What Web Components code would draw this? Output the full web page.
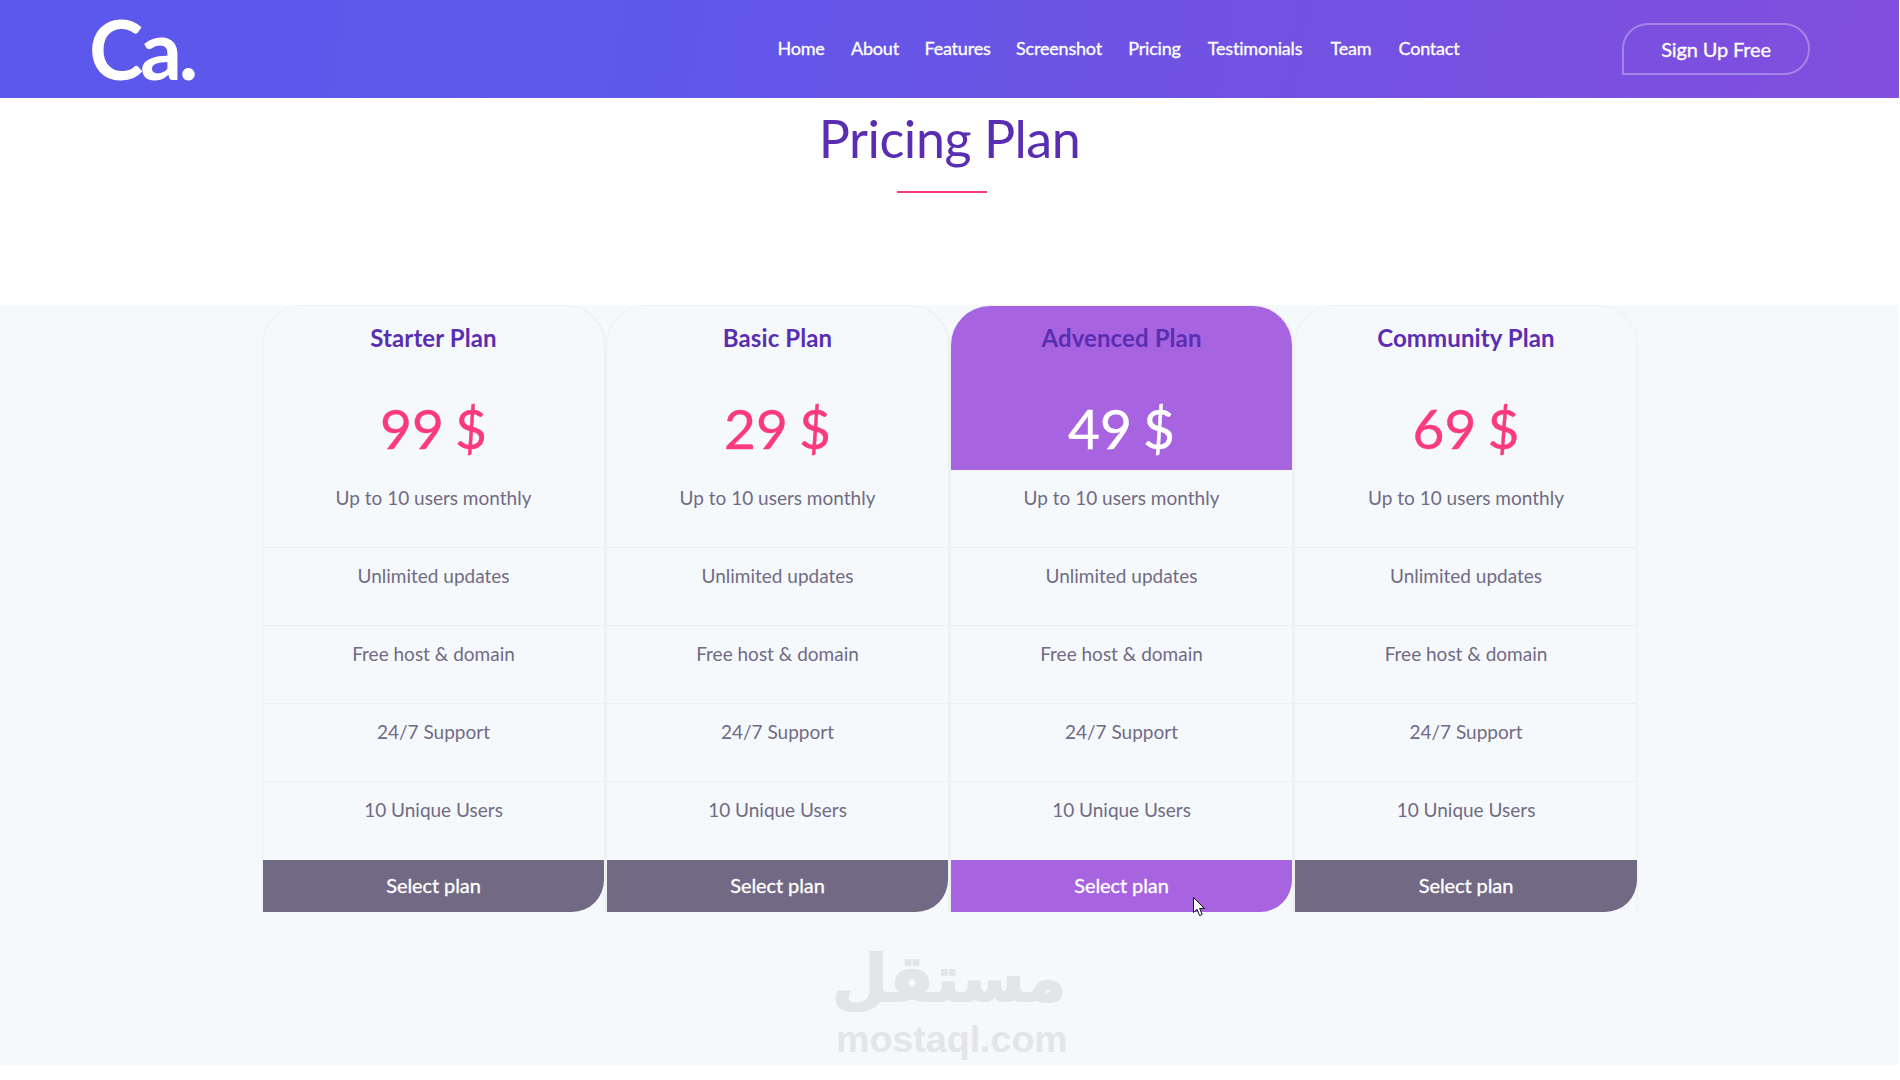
<!DOCTYPE html>
<html lang="en">
<head>
<meta charset="utf-8">
<title>Pricing Plan</title>
<style>
  html, body {
    margin: 0;
    background: #fff;
    font-family: Lato, "Open Sans", sans-serif;
  }

  body {
    width: 1899px;
    height: 1080px;
    overflow: hidden;
  }
</style>
</head>
<body>
<site-header>
  <nav-link style="--w:46px">Home</nav-link>
  <nav-link style="--w:48px">About</nav-link>
  <nav-link style="--w:63px">Features</nav-link>
  <nav-link style="--w:86px">Screenshot</nav-link>
  <nav-link style="--w:51px">Pricing</nav-link>
  <nav-link style="--w:96px">Testimonials</nav-link>
  <nav-link style="--w:42px">Team</nav-link>
  <nav-link style="--w:60px">Contact</nav-link>
</site-header>

<section-title>Pricing Plan</section-title>

<pricing-section>
  <price-card name="Starter Plan" price="99 $">
    <plan-row>Up to 10 users monthly</plan-row>
    <plan-row>Unlimited updates</plan-row>
    <plan-row>Free host &amp; domain</plan-row>
    <plan-row>24/7 Support</plan-row>
    <plan-row last>10 Unique Users</plan-row>
  </price-card>
  <price-card name="Basic Plan" price="29 $">
    <plan-row>Up to 10 users monthly</plan-row>
    <plan-row>Unlimited updates</plan-row>
    <plan-row>Free host &amp; domain</plan-row>
    <plan-row>24/7 Support</plan-row>
    <plan-row last>10 Unique Users</plan-row>
  </price-card>
  <price-card name="Advenced Plan" price="49 $" featured>
    <plan-row>Up to 10 users monthly</plan-row>
    <plan-row>Unlimited updates</plan-row>
    <plan-row>Free host &amp; domain</plan-row>
    <plan-row>24/7 Support</plan-row>
    <plan-row last>10 Unique Users</plan-row>
  </price-card>
  <price-card name="Community Plan" price="69 $">
    <plan-row>Up to 10 users monthly</plan-row>
    <plan-row>Unlimited updates</plan-row>
    <plan-row>Free host &amp; domain</plan-row>
    <plan-row>24/7 Support</plan-row>
    <plan-row last>10 Unique Users</plan-row>
  </price-card>
</pricing-section>

<script>
/*
* Top bar with logo, links and the sign up button.
*/
const headerTemplate = document.createElement('template')
headerTemplate.innerHTML = `
  <style>
    :host {
      display: flex;
      align-items: center;
      height: 98px;
      padding: 0 89px 0 89px;
      box-sizing: border-box;
      background: linear-gradient(100deg, #5b58eb 0%, #5f57ea 35%, #7152e2 65%, #824edd 100%);
      color: #fff;
    }

    .logo {
      font-size: 82px;
      font-weight: 700;
      line-height: 98px;
      letter-spacing: -3px;
      width: 689px;
      flex: none;
      position: relative;
      top: -1px;
    }

    nav {
      display: flex;
      gap: 27px;
      flex: none;
      width: 682px;
      padding-bottom: 3px;
    }

    .signup {
      margin-left: 162px;
      width: 188px;
      height: 52px;
      box-sizing: border-box;
      border: 2px solid rgba(255, 255, 255, 0.3);
      border-radius: 26px 26px 26px 0;
      display: flex;
      align-items: center;
      justify-content: center;
      font-size: 20px;
      letter-spacing: -0.15px;
      -webkit-text-stroke: 0.3px #fff;
    }
  </style>
  <div class="logo">Ca.</div>
  <nav><slot></slot></nav>
  <div class="signup">Sign Up Free</div>
`

customElements.define('site-header',
  /**
   * Represents the top bar.
   */
  class extends HTMLElement {
    /**
     * Creates an instance of the current type.
     */
    constructor () {
      super()
      this.attachShadow({ mode: 'open' })
        .appendChild(headerTemplate.content.cloneNode(true))
    }
  }
)

/*
* One link of the top bar.
*/
const linkTemplate = document.createElement('template')
linkTemplate.innerHTML = `
  <style>
    :host {
      display: flex;
      justify-content: center;
      flex: none;
      width: var(--w);
      white-space: nowrap;
      font-size: 18px;
      line-height: 24px;
      letter-spacing: -0.2px;
      -webkit-text-stroke: 0.3px #fff;
      color: #fff;
    }
  </style>
  <slot></slot>
`

customElements.define('nav-link',
  /**
   * Represents a link.
   */
  class extends HTMLElement {
    /**
     * Creates an instance of the current type.
     */
    constructor () {
      super()
      this.attachShadow({ mode: 'open' })
        .appendChild(linkTemplate.content.cloneNode(true))
    }
  }
)

/*
* Heading over the pricing table.
*/
const titleTemplate = document.createElement('template')
titleTemplate.innerHTML = `
  <style>
    :host {
      display: block;
      height: 207px;
      box-sizing: border-box;
      padding-top: 7px;
      text-align: center;
    }

    h2 {
      margin: 0;
      font-size: 52px;
      font-weight: 400;
      line-height: 66px;
      letter-spacing: -0.45px;
      color: #5a2eb3;
    }

    div {
      width: 90px;
      height: 2px;
      margin: 20px auto 0;
      background: #fb397d;
      position: relative;
      left: -8px;
    }
  </style>
  <h2><slot></slot></h2>
  <div></div>
`

customElements.define('section-title',
  /**
   * Represents the heading.
   */
  class extends HTMLElement {
    /**
     * Creates an instance of the current type.
     */
    constructor () {
      super()
      this.attachShadow({ mode: 'open' })
        .appendChild(titleTemplate.content.cloneNode(true))
    }
  }
)

/*
* Pale band that holds the four plans.
*/
const sectionTemplate = document.createElement('template')
sectionTemplate.innerHTML = `
  <style>
    :host {
      display: block;
      position: relative;
      height: 760px;
      background: #f5f9fc;
    }

    .plans {
      display: grid;
      grid-template-columns: repeat(4, 344px);
      justify-content: center;
      padding-left: 1px;
      width: 1899px;
      box-sizing: border-box;
    }

    .mark {
      position: absolute;
      left: 836px;
      top: 632px;
      width: 228px;
      text-align: center;
      color: #e3e5e8;
      font-weight: 700;
    }

    .mark .ar {
      font-family: "DejaVu Sans", sans-serif;
      font-size: 64px;
      line-height: 84px;
      height: 84px;
      position: relative;
      left: 2px;
      -webkit-text-stroke: 2px #e3e5e8;
    }

    .mark .en {
      font-family: "Liberation Sans", sans-serif;
      font-size: 37.6px;
      line-height: 36px;
    }

    svg {
      position: absolute;
      left: 1193px;
      top: 592px;
    }
  </style>
  <div class="plans"><slot></slot></div>
  <div class="mark">
    <div class="ar" lang="ar" dir="rtl">مستقل</div>
    <div class="en">mostaql.com</div>
  </div>
  <svg width="13" height="20" viewBox="0 0 13 20">
    <path d="M0.5 0.5 V15.5 L4 12.2 L6.6 18.6 L9.2 17.5 L6.6 11.4 H11.4 Z" fill="#fff" stroke="#111" stroke-width="1"/>
  </svg>
`

customElements.define('pricing-section',
  /**
   * Represents the band.
   */
  class extends HTMLElement {
    /**
     * Creates an instance of the current type.
     */
    constructor () {
      super()
      this.attachShadow({ mode: 'open' })
        .appendChild(sectionTemplate.content.cloneNode(true))
    }
  }
)

/*
* One plan column.
*/
const cardTemplate = document.createElement('template')
cardTemplate.innerHTML = `
  <style>
    :host {
      display: flex;
      flex-direction: column;
      height: 607px;
      box-sizing: border-box;
      border: 1px solid #eef1f4;
      border-width: 1px 2px 0 1px;
      border-radius: 40px 40px 0 0;
    }

    :host(:last-child) {
      border-right-width: 1px;
    }

    .top {
      height: 164px;
      box-sizing: border-box;
      padding-top: 15px;
      text-align: center;
      border-radius: 39px 39px 0 0;
    }

    :host([featured]) .top {
      background: #a864e0;
    }

    h3 {
      margin: 0;
      font-size: 24px;
      font-weight: 700;
      line-height: 34px;
      letter-spacing: 0.1px;
      color: #5a2eb3;
    }

    .price {
      margin-top: 39px;
      font-size: 55px;
      font-weight: 400;
      line-height: 68px;
      word-spacing: -3px;
      -webkit-text-stroke: 0.4px currentColor;
      color: #fb397d;
    }

    :host([featured]) .price {
      color: #fff;
    }

    button {
      display: block;
      width: 100%;
      height: 52px;
      margin: 0;
      padding: 0 0 2px;
      border: 0;
      border-radius: 0 0 32px 0;
      background: #726a84;
      color: #fff;
      font: 400 20px Lato, sans-serif;
      letter-spacing: -0.1px;
      -webkit-text-stroke: 0.3px #fff;
    }

    :host([featured]) button {
      background: #a864e0;
    }
  </style>
  <div class="top">
    <h3></h3>
    <div class="price"></div>
  </div>
  <slot></slot>
  <button type="button">Select plan</button>
`

customElements.define('price-card',
  /**
   * Represents a plan.
   */
  class extends HTMLElement {
    /**
     * Creates an instance of the current type.
     */
    constructor () {
      super()
      this.attachShadow({ mode: 'open' })
        .appendChild(cardTemplate.content.cloneNode(true))
    }

    /**
     * Called after the element is inserted into the DOM.
     */
    connectedCallback () {
      this.shadowRoot.querySelector('h3').textContent = this.getAttribute('name')
      this.shadowRoot.querySelector('.price').textContent = this.getAttribute('price')
    }
  }
)

/*
* One line of a plan.
*/
const rowTemplate = document.createElement('template')
rowTemplate.innerHTML = `
  <style>
    :host {
      display: block;
      height: 78px;
      box-sizing: border-box;
      padding-top: 13px;
      border-bottom: 1px solid #ebeef2;
      text-align: center;
      font-size: 19px;
      line-height: 30px;
      color: #726a84;
    }

    :host([last]) {
      border-bottom: 0;
    }
  </style>
  <slot></slot>
`

customElements.define('plan-row',
  /**
   * Represents a line.
   */
  class extends HTMLElement {
    /**
     * Creates an instance of the current type.
     */
    constructor () {
      super()
      this.attachShadow({ mode: 'open' })
        .appendChild(rowTemplate.content.cloneNode(true))
    }
  }
)
</script>
</body>
</html>
